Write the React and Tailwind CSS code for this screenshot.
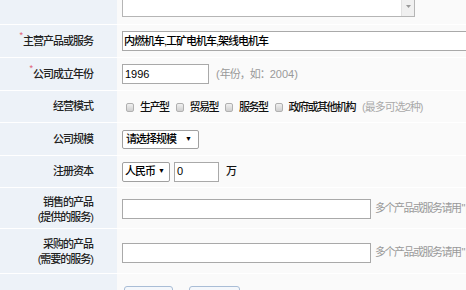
import React from "react";

const font = { fontFamily: '"Liberation Sans","Noto Sans CJK SC",sans-serif' };

function Row({ h, label, children, top = true, contentClass = "items-center" }) {
  return (
    <div className={`flex ${top ? "border-t border-white" : ""} ${h}`}>
      <div className="w-[117px] shrink-0 bg-[#edf2f8] flex items-center justify-end pr-[24px] text-[11px] text-[#222] font-medium tracking-[-1px]">
        {label}
      </div>
      <div className={`flex-1 bg-[#fafafa] flex pl-[5px] ${contentClass}`}>{children}</div>
    </div>
  );
}

function Req({ children }) {
  return (
    <span className="flex items-start">
      <span className="text-[#e05a72] text-[9px] leading-none -mt-[2px] mr-[1px]">*</span>
      <span>{children}</span>
    </span>
  );
}

function Check({ label }) {
  return (
    <span className="flex items-center">
      <span className="w-[8px] h-[9px] rounded-[2px] border border-[#b0b0b0] bg-gradient-to-b from-[#f0f0f0] to-[#cfcfcf] mr-[6px]" />
      <span className="tracking-[-1.5px] mr-[7px] text-[#111] font-medium">{label}</span>
    </span>
  );
}

function Hint() {
  return (
    <span className="ml-[4px] text-[#999] whitespace-nowrap">
      <span className="tracking-[-1.5px]">多个产品或服务请用</span>
      <span className="ml-[1px]">"|"</span>
    </span>
  );
}

export default function App() {
  return (
    <div className="w-[466px] h-[290px] overflow-hidden bg-[#fafafa] text-[11px]" style={font}>
      <Row h="h-[24px]" label="" top={false} contentClass="items-start">
        <div className="w-[293px] h-[17px] bg-white border-l border-r border-b border-[#b5b5b5] flex justify-end">
          <div className="w-[13px] h-full bg-[#f0f0f0] border-l border-[#e2e2e2] flex justify-center pt-[5px]">
            <svg width="5" height="3" viewBox="0 0 5 3"><path d="M0 0h5L2.5 3z" fill="#999" /></svg>
          </div>
        </div>
      </Row>
      <Row h="h-[33px]" label={<Req>主营产品或服务</Req>}>
        <div className="flex-1 h-[20px] bg-white border-t border-b border-l border-[#a9a9a9] flex items-center pl-[1px] text-black font-medium tracking-[-1px]">
          内燃机车,工矿电机车,架线电机车
        </div>
      </Row>
      <Row h="h-[33px]" label={<Req>公司成立年份</Req>}>
        <div className="w-[87px] h-[20px] bg-white border border-[#a9a9a9] flex items-center pl-[2px] text-black">
          1996
        </div>
        <span className="ml-[7px] text-[#999]">
          (<span className="tracking-[-1px]">年份，如：</span>2004)
        </span>
      </Row>
      <Row h="h-[32px]" label="经营模式">
        <div className="flex items-center pl-[4px] pt-[1px]">
          <Check label="生产型" />
          <Check label="贸易型" />
          <Check label="服务型" />
          <Check label="政府或其他机构" />
          <span className="text-[#aaa] tracking-[-1px]">(最多可选2种)</span>
        </div>
      </Row>
      <Row h="h-[33px]" label="公司规模">
        <div className="w-[77px] h-[19px] bg-white border border-[#a0a0a0] rounded-[2px] flex items-center justify-between pl-[3px] pr-[6px] text-black">
          <span className="tracking-[-1px] font-medium">请选择规模</span>
          <span className="text-[7px]">▼</span>
        </div>
      </Row>
      <Row h="h-[32px]" label="注册资本">
        <div className="w-[48px] h-[20px] bg-white border border-[#a0a0a0] rounded-[2px] flex items-center justify-between pl-[2px] pr-[4px] text-black">
          <span className="tracking-[-1px] font-medium">人民币</span>
          <span className="text-[7px]">▼</span>
        </div>
        <div className="ml-[4px] w-[45px] h-[20px] bg-white border border-[#a9a9a9] flex items-center pl-[2px] text-black">
          0
        </div>
        <span className="ml-[7px] text-[#111] font-medium">万</span>
      </Row>
      <Row
        h="h-[41px]"
        label={
          <div className="text-right leading-[15px] pt-[4px]">
            <div>销售的产品</div>
            <div>(提供的服务)</div>
          </div>
        }
      >
        <div className="w-[249px] h-[20px] bg-white border border-[#a9a9a9] mt-[1px]" />
        <Hint />
      </Row>
      <Row
        h="h-[45px]"
        label={
          <div className="text-right leading-[15px] pt-[2px]">
            <div>采购的产品</div>
            <div>(需要的服务)</div>
          </div>
        }
      >
        <div className="w-[249px] h-[20px] bg-white border border-[#a9a9a9] mt-[3px]" />
        <span className="mt-[3px] flex"><Hint /></span>
      </Row>
      <Row h="h-[40px]" label="" contentClass="items-start">
        <div className="flex pt-[12px] pl-[2px] gap-[16px]">
          <div className="w-[49px] h-[24px] rounded-[3px] border border-[#a9bdd6] bg-[#f4f7fb]" />
          <div className="w-[51px] h-[24px] rounded-[3px] border border-[#a9bdd6] bg-[#f4f7fb]" />
        </div>
      </Row>
    </div>
  );
}
